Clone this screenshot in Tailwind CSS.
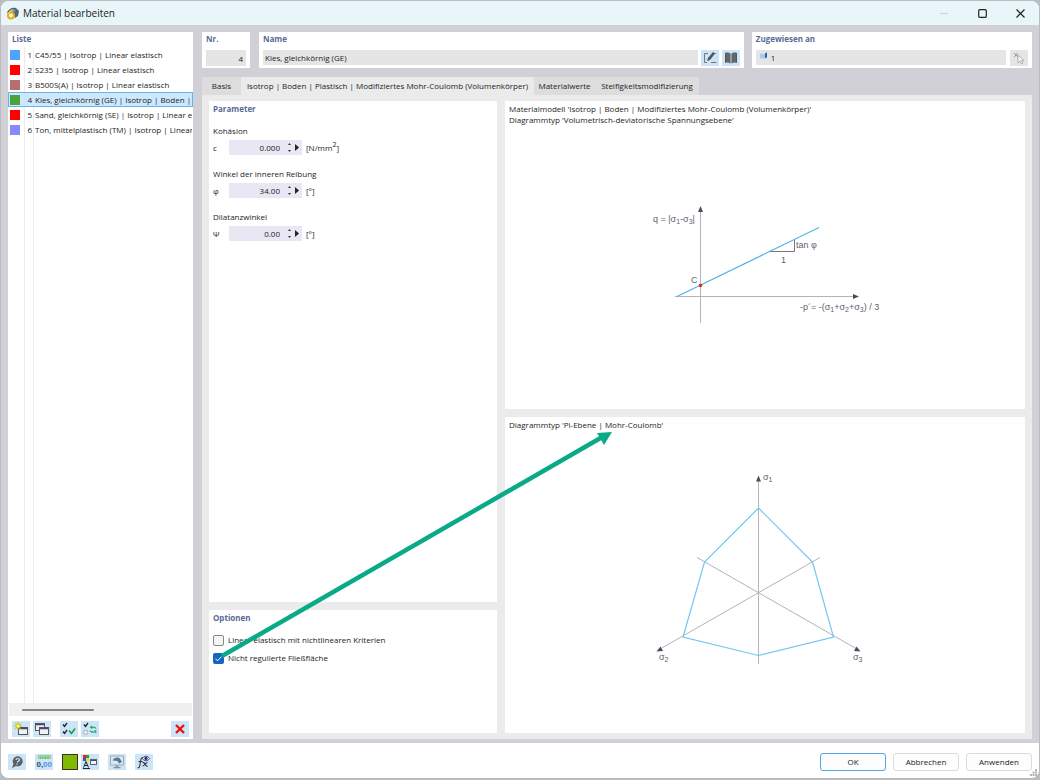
<!DOCTYPE html>
<html lang="de">
<head>
<meta charset="utf-8">
<title>Material bearbeiten</title>
<script src="https://cdn.jsdelivr.net/npm/@tailwindcss/browser@4"></script>
</head>
<body class="h-screen overflow-hidden bg-[#b9bcc0] pt-px pb-0.5 font-['Open_Sans','Noto_Sans',sans-serif] text-[8px] leading-[10px] text-[#1c1c1c]">
<div class="relative mr-px ml-px flex h-full flex-col overflow-hidden rounded-lg bg-white">

  <header class="flex h-6 shrink-0 items-center bg-[#e8f6f9] pl-[5px]">
    <svg class="size-[13px]" viewBox="0 0 13 13" aria-hidden="true"><path d="M1 6C2 2 6 0 10 1l3 3-1 5-3 2-2-5z" fill="#52657a"/><path d="M3 4l5-2 2 2-5 2z" fill="#7f94aa"/><circle cx="5" cy="8.600" r="3" fill="none" stroke="#e3ae1b" stroke-width="2"/><path d="M3 7.500C3 5 4.500 3.500 7 3" fill="none" stroke="#f4c838" stroke-width="1.600"/></svg>
    <h1 class="ml-1 flex-1 text-[10px] leading-[14px]">Material bearbeiten</h1>
    <button class="grid h-6 w-[38px] place-items-center" aria-label="Minimieren"><svg class="h-2 w-2" viewBox="0 0 8 8"><path d="M0 4.500h8" stroke="#c5d2d6"/></svg></button>
    <button class="grid h-6 w-[38px] place-items-center" aria-label="Maximieren"><svg class="size-[9px]" viewBox="0 0 9 9"><rect x=".7" y=".7" width="7.600" height="7.600" rx="1" fill="none" stroke="#222" stroke-width="1.200"/></svg></button>
    <button class="grid h-6 w-[38px] place-items-center" aria-label="Schließen"><svg class="size-[9px]" viewBox="0 0 9 9"><path d="M.5.5l8 8M8.500.5l-8 8" stroke="#222" stroke-width="1.200"/></svg></button>
  </header>

  <main class="flex min-h-0 flex-1 gap-[9px] bg-[#d0d0d6] px-[7px] pt-[7px] pb-1">
    <aside class="flex w-[185px] shrink-0 flex-col bg-white">
      <h2 class="h-[15px] px-1 pt-0.5 font-bold text-[#5a6a94]">Liste</h2>
      <div class="relative min-h-0 flex-1 overflow-hidden">
        <div class="absolute inset-y-0 left-4 w-[10px] border-x border-[#ececec]"></div>
        <ul class="relative">
          <li><button class="flex h-[15px] w-full items-center overflow-hidden border border-transparent px-px text-left whitespace-nowrap"><span class="size-[10px] shrink-0 bg-[#4da3ff]"></span><span class="w-3 shrink-0 text-right">1</span><span class="ml-[3px]">C45/55 | Isotrop | Linear elastisch</span></button></li>
          <li><button class="flex h-[15px] w-full items-center overflow-hidden border border-transparent px-px text-left whitespace-nowrap"><span class="size-[10px] shrink-0 bg-[#ff0000]"></span><span class="w-3 shrink-0 text-right">2</span><span class="ml-[3px]">S235 | Isotrop | Linear elastisch</span></button></li>
          <li><button class="flex h-[15px] w-full items-center overflow-hidden border border-transparent px-px text-left whitespace-nowrap"><span class="size-[10px] shrink-0 bg-[#b76e70]"></span><span class="w-3 shrink-0 text-right">3</span><span class="ml-[3px]">B500S(A) | Isotrop | Linear elastisch</span></button></li>
          <li><button class="flex h-[15px] w-full items-center overflow-hidden border border-[#69b3ea] bg-[#cce8ff] px-px text-left whitespace-nowrap" aria-current="true"><span class="size-[10px] shrink-0 bg-[#4ba43a]"></span><span class="w-3 shrink-0 text-right">4</span><span class="ml-[3px]">Kies, gleichkörnig (GE) | Isotrop | Boden |</span></button></li>
          <li><button class="flex h-[15px] w-full items-center overflow-hidden border border-transparent px-px text-left whitespace-nowrap"><span class="size-[10px] shrink-0 bg-[#ff0000]"></span><span class="w-3 shrink-0 text-right">5</span><span class="ml-[3px]">Sand, gleichkörnig (SE) | Isotrop | Linear e</span></button></li>
          <li><button class="flex h-[15px] w-full items-center overflow-hidden border border-transparent px-px text-left whitespace-nowrap"><span class="size-[10px] shrink-0 bg-[#8789ff]"></span><span class="w-3 shrink-0 text-right">6</span><span class="ml-[3px]">Ton, mittelplastisch (TM) | Isotrop | Linear</span></button></li>
        </ul>
      </div>
      <div class="mx-px flex h-[13px] shrink-0 items-center bg-[#f0f0f0] pl-[13px]"><div class="h-0.5 w-[72px] rounded-full bg-[#858585]"></div></div>
      <div class="flex h-[23px] shrink-0 items-center gap-[3px] px-1 pt-0.5">
        <button class="grid h-4 w-[18px] place-items-center bg-[#cce4f7]" aria-label="Neu"><svg class="size-[14px]" viewBox="0 0 14 14"><rect x="4.500" y="5.500" width="9" height="7" fill="#f3f0ed" stroke="#555"/><path d="M5 6.500h8" stroke="#424a78" stroke-width="1.500"/><path d="M4 0v8M0 4h8M1.300 1.300l5.400 5.400M6.700 1.300L1.300 6.700" stroke="#c9bd13" stroke-width="1.100"/><circle cx="4" cy="4" r="1.500" fill="#ffff54"/></svg></button>
        <button class="mr-1.5 grid h-4 w-[18px] place-items-center bg-[#cce4f7]" aria-label="Kopieren"><svg class="size-[14px]" viewBox="0 0 14 14"><rect x=".5" y="1.500" width="9" height="7" fill="#f3f0ed" stroke="#555"/><path d="M1 2.500h8" stroke="#424a78" stroke-width="1.500"/><rect x="4.500" y="5.500" width="9" height="7" fill="#f3f0ed" stroke="#555"/><path d="M5 6.500h8" stroke="#424a78" stroke-width="1.500"/></svg></button>
        <button class="grid h-4 w-[18px] place-items-center bg-[#cce4f7]" aria-label="Alle auswählen"><svg class="size-[14px]" viewBox="0 0 14 14"><path d="M1 2.500l1.500 2L5 1M1 9.500l1.500 2L5 8" fill="none" stroke="#222" stroke-width="1.300"/><path d="M7 8.500l2.500 3L13 6.500" fill="none" stroke="#0aa34e" stroke-width="1.600"/></svg></button>
        <button class="grid h-4 w-[18px] place-items-center bg-[#cce4f7]" aria-label="Auswahl umkehren"><svg class="size-[14px]" viewBox="0 0 14 14"><path d="M1 2.500l1.500 2L5 1" fill="none" stroke="#222" stroke-width="1.300"/><rect x="1" y="8.500" width="3.600" height="3.600" fill="#eee" stroke="#aaa" stroke-width=".7"/><path d="M13 6.500c-1-1.500-3-1.500-5-1M7 9c2 1.500 4 1.500 6 .5" fill="none" stroke="#22a866" stroke-width="1.300"/><path d="M9 3.500L6.500 5.500l3 1.500zM11 8l2.500.5-.5 3z" fill="#22a866"/></svg></button>
        <button class="ml-auto grid h-4 w-[18px] place-items-center bg-[#cce4f7]" aria-label="Löschen"><svg class="size-[10px]" viewBox="0 0 10 10"><path d="M1 1l8 8M9 1L1 9" stroke="#f00d0d" stroke-width="2.300"/></svg></button>
      </div>
    </aside>

    <div class="flex min-w-0 flex-1 flex-col">
      <div class="flex h-9 shrink-0 gap-2">
        <section class="mr-px w-[48px] shrink-0 bg-white px-1 pt-0.5">
          <label for="nr" class="block h-4 font-bold text-[#5a6a94]">Nr.</label>
          <input id="nr" value="4" readonly class="block h-4 w-full bg-[#e5e5e5] px-[3px] text-right">
        </section>
        <section class="min-w-0 flex-[487] bg-white px-1 pt-0.5">
          <label for="name" class="block h-4 font-bold text-[#5a6a94]">Name</label>
          <div class="flex gap-[3px]">
            <input id="name" value="Kies, gleichkörnig (GE)" readonly class="block h-[15px] min-w-0 flex-1 bg-[#e5e5e5] px-0.5">
            <button class="grid h-4 w-[18px] place-items-center bg-[#cce4f7]" aria-label="Name bearbeiten"><svg class="size-[14px]" viewBox="0 0 14 14"><path d="M5 2.500H1.500v9H4M8 11.500h5.500M10 2.500h3" fill="none" stroke="#777"/><path d="M4 10l1-3 5-6 2 1.500-5 6.500z" fill="#555"/></svg></button>
            <button class="grid h-4 w-[18px] place-items-center bg-[#cce4f7]" aria-label="Materialbibliothek"><svg class="size-[14px]" viewBox="0 0 14 14"><path d="M1 2c2-.7 4-.5 5.500.5v10C5 11.300 3 11.300 1 12zM13 2c-2-.7-4-.5-5.500.5v10c1.500-1.200 3.500-1.200 5.500-.5z" fill="#555"/><path d="M3 2v9M5 2v9M9 2v9M11 2v9" stroke="#8a9197" stroke-width=".6"/></svg></button>
          </div>
        </section>
        <section class="min-w-0 flex-[278] bg-white px-1 pt-0.5">
          <label for="zug" class="block h-4 font-bold text-[#5a6a94]">Zugewiesen an</label>
          <div class="flex gap-1">
            <div class="flex h-[15px] min-w-0 flex-1 items-center bg-[#e5e5e5] pl-1">
              <svg class="mb-1 h-[7px] w-[7px] shrink-0" viewBox="0 0 7 7"><path d="M0 1.500h5v5H0z" fill="#a9cdf1"/><path d="M0 1.500L1.500.2H7L5 1.500z" fill="#d8e9fa"/><path d="M5 1.500L7 .2v5L5 6.500z" fill="#345f99"/></svg>
              <input id="zug" value="1" readonly class="h-full min-w-0 flex-1 bg-transparent px-1">
            </div>
            <button class="grid h-4 w-[18px] place-items-center bg-[#e5e5e5]" aria-label="Auswählen"><svg class="size-[14px]" viewBox="0 0 14 14"><path d="M2 2l4 4M6 2L2 6" stroke="#999"/><path d="M6 4v8l2-2 1.500 3 1.500-1-1.500-2.500H12z" fill="#f5f5f5" stroke="#a5a5a5" stroke-width=".8"/></svg></button>
          </div>
        </section>
      </div>

      <nav class="mt-[9px] flex h-[18px] shrink-0 items-stretch" role="tablist">
        <button role="tab" class="w-[39px] bg-[#dddddd]">Basis</button>
        <button role="tab" aria-selected="true" class="w-[293px] bg-[#ebebeb]">Isotrop | Boden | Plastisch | Modifiziertes Mohr-Coulomb (Volumenkörper)</button>
        <button role="tab" class="w-[61px] bg-[#dddddd]">Materialwerte</button>
        <button role="tab" class="w-[104px] bg-[#dddddd]">Steifigkeitsmodifizierung</button>
      </nav>

      <div class="grid min-h-0 flex-1 grid-cols-[288fr_520fr] gap-2 bg-[#ebebeb] px-[7px] pt-[6px] pb-1.5">
        <div class="flex min-h-0 flex-col gap-2">
          <section class="min-h-0 flex-1 bg-white px-1 pt-[3px]">
            <h2 class="mb-3 font-bold text-[#5a6a94]">Parameter</h2>
            <div class="flex flex-col gap-[14px]">
              <div class="flex flex-col gap-1">
                <p>Kohäsion</p>
                <div class="flex h-[15px] items-center">
                  <label for="c" class="w-4">c</label>
                  <div class="flex h-[15px] w-[73px] items-center bg-[#e8e7f3]"><input id="c" value="0.000" class="h-full w-[51px] bg-transparent text-right"><button class="ml-[5px] grid h-full w-2 place-items-center" aria-label="c ändern"><svg class="h-[9px] w-[5px]" viewBox="0 0 5 9"><path d="M1 2l1.500-2L4 2zM1 7l1.500 2L4 7z" fill="#333"/></svg></button><button class="grid h-full w-2 place-items-center" aria-label="c Menü"><svg class="h-[7px] w-1" viewBox="0 0 4 7"><path d="M0 0l4 3.500L0 7z" fill="#222"/></svg></button></div>
                  <span class="ml-1">[N/mm<sup class="text-[7px] leading-none">2</sup>]</span>
                </div>
              </div>
              <div class="flex flex-col gap-1">
                <p>Winkel der inneren Reibung</p>
                <div class="flex h-[15px] items-center">
                  <label for="phi" class="w-4">φ</label>
                  <div class="flex h-[15px] w-[73px] items-center bg-[#e8e7f3]"><input id="phi" value="34.00" class="h-full w-[51px] bg-transparent text-right"><button class="ml-[5px] grid h-full w-2 place-items-center" aria-label="φ ändern"><svg class="h-[9px] w-[5px]" viewBox="0 0 5 9"><path d="M1 2l1.500-2L4 2zM1 7l1.500 2L4 7z" fill="#333"/></svg></button><button class="grid h-full w-2 place-items-center" aria-label="φ Menü"><svg class="h-[7px] w-1" viewBox="0 0 4 7"><path d="M0 0l4 3.500L0 7z" fill="#222"/></svg></button></div>
                  <span class="ml-1">[°]</span>
                </div>
              </div>
              <div class="flex flex-col gap-1">
                <p>Dilatanzwinkel</p>
                <div class="flex h-[15px] items-center">
                  <label for="psi" class="w-4">Ψ</label>
                  <div class="flex h-[15px] w-[73px] items-center bg-[#e8e7f3]"><input id="psi" value="0.00" class="h-full w-[51px] bg-transparent text-right"><button class="ml-[5px] grid h-full w-2 place-items-center" aria-label="ψ ändern"><svg class="h-[9px] w-[5px]" viewBox="0 0 5 9"><path d="M1 2l1.500-2L4 2zM1 7l1.500 2L4 7z" fill="#333"/></svg></button><button class="grid h-full w-2 place-items-center" aria-label="ψ Menü"><svg class="h-[7px] w-1" viewBox="0 0 4 7"><path d="M0 0l4 3.500L0 7z" fill="#222"/></svg></button></div>
                  <span class="ml-1">[°]</span>
                </div>
              </div>
            </div>
          </section>
          <section class="h-[123px] shrink-0 bg-white px-1 pt-[3px]">
            <h2 class="mb-2 font-bold text-[#5a6a94]">Optionen</h2>
            <label class="flex h-[18px] items-center gap-1"><input type="checkbox" class="size-[11px] appearance-none rounded-[2px] border border-[#878787] bg-[#f5f5f5]">Linear elastisch mit nichtlinearen Kriterien</label>
            <label class="flex h-[18px] items-center gap-1"><span class="relative size-[11px]"><input type="checkbox" checked class="block size-[11px] appearance-none rounded-[2px] bg-[#1467c0]"><svg class="pointer-events-none absolute inset-0 size-[11px]" viewBox="0 0 11 11"><path d="M2.500 5.700l2 2 4-4" fill="none" stroke="#fff"/></svg></span>Nicht regulierte Fließfläche</label>
          </section>
        </div>

        <div class="flex min-h-0 flex-col gap-2">
          <section class="flex min-h-0 flex-[308] flex-col bg-white">
            <div class="h-[26px] px-1 pt-0.5 leading-[11px]"><p>Materialmodell 'Isotrop | Boden | Modifiziertes Mohr-Coulomb (Volumenkörper)'</p><p>Diagrammtyp 'Volumetrisch-deviatorische Spannungsebene'</p></div>
            <svg class="min-h-0 w-full flex-1" viewBox="505 127 520 282" font-family="Liberation Sans, sans-serif" font-size="9" fill="#60606e">
              <path d="M700.500 209v114M675 296.500h181" stroke="#b3b3bb" fill="none"/>
              <path d="M700.500 206l2.500 6h-5zM859 296.500l-6-2.500v5z" fill="#4b4b60"/>
              <path d="M769 251.500h25.500V240" stroke="#777783" fill="none"/>
              <path d="M677 296.500L819 227.500" stroke="#50b4e8" stroke-width="1.200"/>
              <circle cx="700.500" cy="285.500" r="1.800" fill="#e02a12"/>
              <text x="653" y="222">q = |σ<tspan font-size="7" dy="2">1</tspan><tspan dy="-2">-σ</tspan><tspan font-size="7" dy="2">3</tspan><tspan dy="-2">|</tspan></text>
              <text x="691" y="283">C</text><text x="796" y="248">tan φ</text><text x="781" y="263">1</text>
              <text x="800" y="310">-p´= -(σ<tspan font-size="7" dy="2">1</tspan><tspan dy="-2">+σ</tspan><tspan font-size="7" dy="2">2</tspan><tspan dy="-2">+σ</tspan><tspan font-size="7" dy="2">3</tspan><tspan dy="-2">) / 3</tspan></text>
            </svg>
          </section>
          <section class="flex min-h-0 flex-[316] flex-col bg-white">
            <p class="h-4 px-1 pt-[3px]">Diagrammtyp 'Pi-Ebene | Mohr-Coulomb'</p>
            <svg class="min-h-0 w-full flex-1" viewBox="505 433 520 300" font-family="Liberation Sans, sans-serif" font-size="9" fill="#60606e">
              <path d="M758.500 480v184M820 557.500L661 648.500M697 557.500L856 648.500" stroke="#b3b3bb" fill="none"/>
              <path d="M758.500 475.500l2.500 6h-5zM656.500 651.500l6.500-.5-2.500-4.500zM860.500 651.500l-6.500-.5 2.500-4.500z" fill="#4b4b60"/>
              <path d="M758.500 508L812.500 562L833.500 637L758.500 655.500L683 637L704.500 562z" fill="none" stroke="#74c6ee" stroke-width="1.200"/>
              <text x="763" y="480">σ<tspan font-size="7" dy="2">1</tspan></text><text x="659" y="660">σ<tspan font-size="7" dy="2">2</tspan></text><text x="853" y="660">σ<tspan font-size="7" dy="2">3</tspan></text>
            </svg>
          </section>
        </div>
      </div>
    </div>
  </main>

  <footer class="flex h-[35px] shrink-0 items-center bg-white px-[7px] pt-[3px]">
    <div class="flex items-center gap-[9px]">
      <button class="grid h-4 w-[18px] place-items-center bg-[#cce4f7]" aria-label="Hilfe"><svg class="size-[14px]" viewBox="0 0 14 14"><path d="M2 13l1.500-4A5 5 0 1 1 6 11z" fill="#5c5f63"/><path d="M6 5c0-2 4-2 3.500 0C9 6.500 7.500 6 7.300 7.500M7 8.500v1.200" fill="none" stroke="#dbeaf6" stroke-width="1.200"/></svg></button>
      <button class="grid h-4 w-[18px] place-items-center bg-[#cce4f7]" aria-label="Einheiten"><svg class="h-4 w-[18px]" viewBox="0 0 18 16" font-family="Liberation Sans, sans-serif" font-size="8" font-weight="bold"><rect x="3" y="1" width="13" height="4" fill="#91d59b"/><path d="M5.500 3v2M8 3v2M10.500 3v2M13 3v2" stroke="#58a865" stroke-width=".7"/><text x="1.500" y="13" fill="#264a78">0,</text><text x="8" y="13" fill="#5b91dc">00</text></svg></button>
      <button class="size-4 border border-[#333] bg-[#7fb900]" aria-label="Farbe"></button>
      <button class="-ml-1.5 grid h-4 w-[18px] place-items-center bg-[#cce4f7]" aria-label="Darstellung"><svg class="size-[14px]" viewBox="0 0 14 14"><path d="M0 0h3v3H0z" fill="#ee2020"/><path d="M3 0h3v3H3z" fill="#25a62b"/><path d="M0 3h3v3H0z" fill="#2857d7"/><path d="M3 3h3v3H3z" fill="#f2dd20"/><path d="M.5 12.500L3 6.500l2.500 6M1.500 10.500h3M0 13.500h7" fill="none" stroke="#222"/><rect x="7.500" y="4.500" width="6" height="5" fill="#f4f4f4" stroke="#59617f"/><path d="M8 5.500h5" stroke="#424a78"/></svg></button>
      <button class="grid h-4 w-[18px] place-items-center bg-[#cce4f7]" aria-label="Anzeige"><svg class="h-4 w-[18px]" viewBox="0 0 18 16"><path d="M2.500 2h13v9h-13z" fill="#dce8f1" stroke="#8fa0af" stroke-width=".8"/><path d="M4.500 6.500C6 3.500 9 2.700 11.500 4l2.500 4-3 1.500L9.500 7z" fill="#56799a"/><path d="M7.500 11.500h3v1.500h2v1.200h-7V13h2z" fill="#88929b"/></svg></button>
      <button class="grid h-4 w-[18px] place-items-center bg-[#cce4f7]" aria-label="Formel"><svg class="h-4 w-[18px]" viewBox="0 0 18 16"><path d="M8 4C6.500 3 6 4.500 5.600 7l-.9 5c-.3 1.700-1 2-2 1.500M3.500 7.500h4" fill="none" stroke="#333" stroke-width="1.100"/><path d="M7.500 8.500c3-1 2.500 4.500 5 3.500M12.500 8.500c-2 0-3 3.500-5 3.500" fill="none" stroke="#333" stroke-width="1.100"/><path d="M7.500 4.500c1.800-3 5.200-3 7 0-1.800 3-5.200 3-7 0z" fill="#fff" stroke="#303b75" stroke-width=".9"/><circle cx="11" cy="4.500" r="1.700" fill="#303b75"/></svg></button>
    </div>
    <div class="ml-auto flex gap-[7px]">
      <button class="h-[18px] w-[66px] rounded-[3px] border border-[#53a5e4] bg-[#fdfdfd]">OK</button>
      <button class="h-[18px] w-[66px] rounded-[3px] border border-[#dcdcdc] bg-[#fdfdfd]">Abbrechen</button>
      <button class="h-[18px] w-[66px] rounded-[3px] border border-[#dcdcdc] bg-[#fdfdfd]">Anwenden</button>
    </div>
    <svg class="absolute right-0.5 bottom-0.5 size-[7px]" viewBox="0 0 7 7" aria-hidden="true"><path d="M5 0h2v2H5zM2.500 2.500h2v2h-2zM5 2.500h2v2H5zM0 5h2v2H0zM2.500 5h2v2h-2zM5 5h2v2H5z" fill="#b5b5b5"/></svg>
  </footer>

  <svg class="pointer-events-none absolute inset-0 size-full" viewBox="1 1 1038 777" aria-hidden="true"><path d="M222 656L604 436" stroke="#0aaa88" stroke-width="4.500"/><path d="M612 432L604 445L597 433z" fill="#0aaa88"/></svg>
</div>
</body>
</html>
